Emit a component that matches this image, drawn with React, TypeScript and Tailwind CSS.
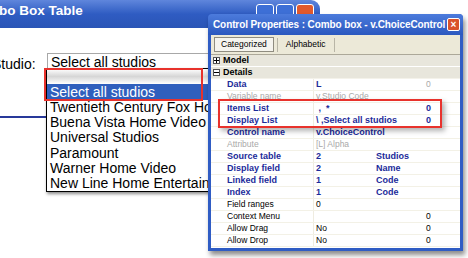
import React from 'react';

type Kind = 'blue' | 'gray' | 'black';

interface PropRow {
  label: string;
  value: string;
  extra?: string;
  num?: string;
  kind: Kind;
  numKind?: Kind;
}

const rows: PropRow[] = [
  { label: 'Data', value: 'L', num: '0', kind: 'blue', numKind: 'gray' },
  { label: 'Variable name', value: 'v.Studio Code', kind: 'gray' },
  { label: 'Items List', value: '\u00a0,\u00a0\u00a0*', num: '0', kind: 'blue' },
  { label: 'Display List', value: '\\ ,Select all studios', num: '0', kind: 'blue' },
  { label: 'Control name', value: 'v.ChoiceControl', kind: 'blue' },
  { label: 'Attribute', value: '[L] Alpha', kind: 'gray' },
  { label: 'Source table', value: '2', extra: 'Studios', kind: 'blue' },
  { label: 'Display field', value: '2', extra: 'Name', kind: 'blue' },
  { label: 'Linked field', value: '1', extra: 'Code', kind: 'blue' },
  { label: 'Index', value: '1', extra: 'Code', kind: 'blue' },
  { label: 'Field ranges', value: '0', kind: 'black' },
  { label: 'Context Menu', value: '', num: '0', kind: 'black' },
  { label: 'Allow Drag', value: 'No', num: '0', kind: 'black' },
  { label: 'Allow Drop', value: 'No', num: '0', kind: 'black' },
];

const studios = [
  'Twentieth Century Fox Home Entertainment',
  'Buena Vista Home Video',
  'Universal Studios',
  'Paramount',
  'Warner Home Video',
  'New Line Home Entertainment',
];

const textCls: Record<Kind, string> = {
  blue: 'text-[#1c2b9a] font-bold text-[9px]',
  gray: 'text-[#a9a9a9] text-[8.5px]',
  black: 'text-black text-[8.5px]',
};

function TreeBox({ open }: { open: boolean }) {
  return (
    <span className="relative w-[7px] h-[7px] border border-[#555] bg-white mr-[3px] flex items-center justify-center">
      <span className="absolute w-[5px] h-px bg-black" />
      {!open && <span className="absolute w-px h-[5px] bg-black" />}
    </span>
  );
}

export default function App() {
  return (
    <div
      className="relative w-[468px] h-[258px] bg-white overflow-hidden"
      style={{ fontFamily: '"Liberation Sans", Arial, sans-serif' }}
    >
      {/* background window: Combo Box Table */}
      <div className="absolute left-0 top-0 w-[320px] h-full">
        <div className="h-[28px] rounded-tr-[9px] bg-gradient-to-b from-[#5f86dc] via-[#2f5cc2] to-[#2a55b6] flex items-center justify-between pr-[6px]">
          <span className="text-white font-bold text-[13.5px] ml-[-31px] mt-[-6px] whitespace-nowrap">
            Combo Box Table
          </span>
          <div className="flex gap-[2px] mt-[-2px]">
            <span className="w-[18px] h-[18px] rounded-[3px] border border-white bg-[#3d6fd6]" />
            <span className="w-[18px] h-[18px] rounded-[3px] border border-white bg-[#3d6fd6]" />
            <span className="w-[18px] h-[18px] rounded-[3px] border border-white bg-[#e0592d]" />
          </div>
        </div>

        <div className="flex items-start mt-[25px]">
          <span className="text-[14px] text-black ml-[-8px] mt-[1px] w-[55px]">Studio:</span>
          <div className="flex-1 h-[17px] border-t border-l border-[#a8a8a8] text-[14px] leading-[17px] pl-[3px] text-black whitespace-nowrap">
            Select all studios
          </div>
        </div>

        <div className="mt-[41px] h-[2px] bg-[#28399a]" />
      </div>

      {/* dropdown list */}
      <div className="absolute left-[46px] top-[68px] w-[180px] border border-black border-r-0 bg-white shadow-[1px_2px_3px_rgba(0,0,0,0.45)]">
        <div className="h-[15px] bg-gradient-to-b from-white via-[#d6d6d6] to-white" />
        <div className="h-[16px] bg-[#2f5fbd] text-white text-[14px] leading-[16px] pl-[3px] whitespace-nowrap">
          Select all studios
        </div>
        {studios.map((s) => (
          <div key={s} className="h-[15.2px] text-[14px] leading-[15px] pl-[3px] text-black whitespace-nowrap">
            {s}
          </div>
        ))}
      </div>

      {/* red highlight on list */}
      <div className="absolute left-[44px] top-[68px] w-[159px] h-[33px] border-2 border-[#e8322c]" />

      {/* properties window */}
      <div className="absolute left-[208px] top-[14px] w-[255px] h-[237px] bg-[#2f5cc4] rounded-t-[4px] flex flex-col shadow-[2px_4px_5px_rgba(0,0,0,0.45)]">
        <div className="h-[21px] flex items-center justify-between pl-[5px] pr-[3px] bg-gradient-to-b from-[#4c7bdc] to-[#2b58bf] rounded-t-[4px]">
          <span className="text-white text-[10px] font-bold tracking-[-0.1px] whitespace-nowrap">
            Control Properties : Combo box - v.ChoiceControl
          </span>
          <span className="w-[13px] h-[13px] rounded-[2px] border border-white bg-[#d9532b] text-white text-[10px] leading-[10px] font-bold flex items-center justify-center">
            ×
          </span>
        </div>

        <div className="flex-1 mx-[3px] mb-[3px] bg-white flex flex-col">
          <div className="h-[20px] bg-[#ece9d8] flex items-center pl-[3px] border-b border-[#aca899]">
            <span className="h-[15px] px-[6px] border border-[#8f8c80] bg-[#f5f4ee] text-[8.5px] leading-[13px] text-black">
              Categorized
            </span>
            <span className="w-px h-[14px] bg-[#b8b5a6] ml-[3px] mr-[8px]" />
            <span className="text-[8.5px] text-black">Alphabetic</span>
            <span className="w-px h-[14px] bg-[#b8b5a6] ml-[8px]" />
          </div>

          <div className="h-[12px] bg-[#e8e6dc] flex items-center pl-[2px] border-b border-white">
            <TreeBox open={false} />
            <span className="text-[9px] leading-[11px] font-bold text-black">Model</span>
          </div>
          <div className="h-[12px] bg-[#e8e6dc] flex items-center pl-[2px] border-b border-[#f4f2ea]">
            <TreeBox open />
            <span className="text-[9px] leading-[11px] font-bold text-black">Details</span>
          </div>

          {rows.map((r) => (
            <div key={r.label} className="h-[12px] leading-[11px] flex items-center border-b border-[#f3f1e6] whitespace-nowrap">
              <span className={`w-[102px] pl-[16px] ${textCls[r.kind]}`}>{r.label}</span>
              <span className="w-px h-full bg-[#efece0]" />
              <span className={`w-[62px] pl-[2px] ${textCls[r.kind]}`}>{r.value}</span>
              <span className={`w-[50px] ${textCls[r.kind]}`}>{r.extra ?? ''}</span>
              <span className={textCls[r.numKind ?? r.kind]}>{r.num ?? ''}</span>
            </div>
          ))}
          <div className="flex-1 bg-white" />
        </div>

        {/* red highlight on Items / Display list */}
        <div className="absolute left-[10px] top-[85px] w-[224px] h-[29px] border-2 border-[#e8322c] shadow-[3px_3px_5px_rgba(0,0,0,0.3)]" />
      </div>
    </div>
  );
}
